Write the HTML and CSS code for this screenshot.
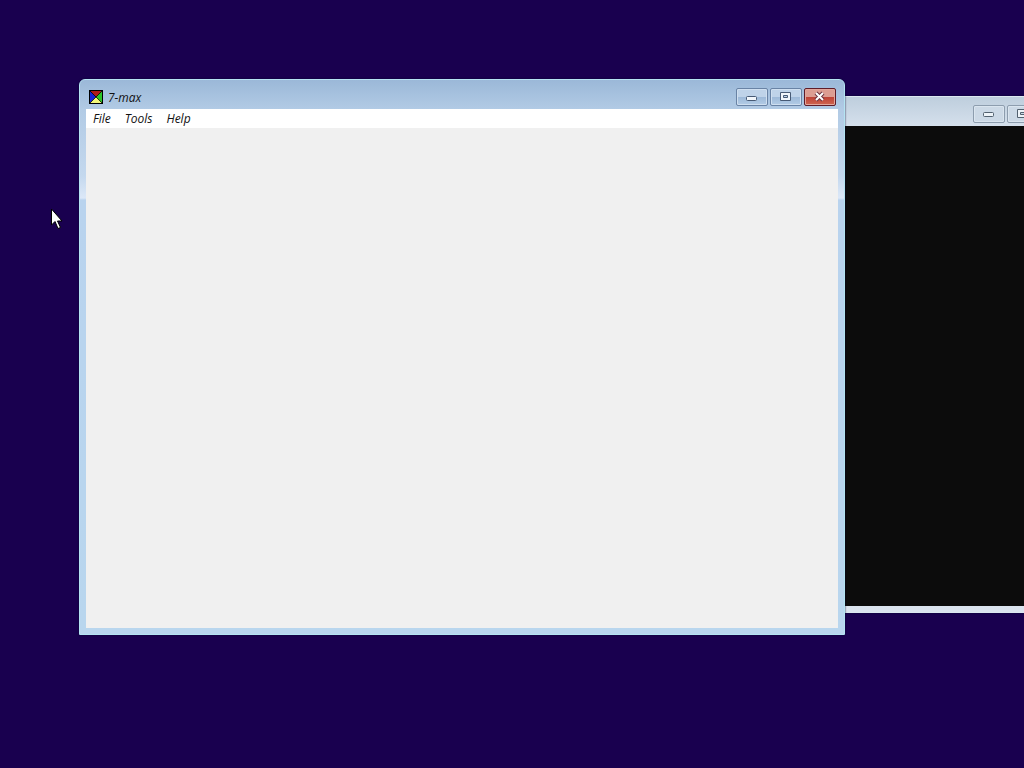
FILE: index.html
```html
<!DOCTYPE html>
<html lang="en">
<head>
  <meta charset="UTF-8">
  <title>7-max</title>
  <meta name="viewport" content="width=device-width, initial-scale=1.0">
  <link rel="stylesheet" href="styles.css">
</head>
<body>

  <main class="desktop">

    <section class="window console" aria-label="Console">
      <header class="titlebar">
        <div class="controls">
          <button class="control" type="button" aria-label="Minimize">
            <svg width="12" height="12" viewBox="0 0 12 12"><rect x="0.5" y="4.5" width="10" height="4" rx="1" fill="#edf3f8" stroke="#52616f"/></svg>
          </button>
          <button class="control" type="button" aria-label="Maximize">
            <svg width="12" height="12" viewBox="0 0 12 12"><path d="M0.5 1.5h10v8h-10zM3.5 4.5h4v2h-4z" fill="#edf3f8" fill-rule="evenodd" stroke="#52616f"/></svg>
          </button>
          <button class="control" type="button" aria-label="Close">
            <svg width="12" height="12" viewBox="0 0 12 12"><path d="M2 2l7 7M9 2l-7 7" stroke="#52616f" stroke-width="2"/></svg>
          </button>
        </div>
      </header>
      <div class="screen"></div>
    </section>

    <section class="window app" aria-label="7-max">
      <header class="titlebar">
        <svg class="logo" width="14" height="14" viewBox="0 0 14 14">
          <rect width="14" height="14" fill="#000"/>
          <path d="M1 1h12L7 7z" fill="#b01a1a"/>
          <path d="M1 1l6 6-6 6z" fill="#1722d8"/>
          <path d="M13 1v12L7 7z" fill="#2cc428"/>
          <path d="M1 13h12L7 7z" fill="#f2f77a"/>
          <path d="M1 1l12 12M13 1L1 13" stroke="#000" stroke-width="0.7"/>
        </svg>
        <h1 class="title">7-max</h1>
        <div class="controls">
          <button class="control" type="button" aria-label="Minimize">
            <svg width="12" height="12" viewBox="0 0 12 12"><rect x="0.5" y="5.5" width="10" height="4" rx="1" fill="#f1f6fb" stroke="#475a75"/></svg>
          </button>
          <button class="control" type="button" aria-label="Maximize">
            <svg width="12" height="12" viewBox="0 0 12 12"><path d="M0.5 1.5h10v8h-10zM3.5 4.5h4v2h-4z" fill="#f1f6fb" fill-rule="evenodd" stroke="#475a75"/></svg>
          </button>
          <button class="control close" type="button" aria-label="Close">
            <svg width="12" height="12" viewBox="0 0 12 12"><path d="M2 2l7 7M9 2l-7 7" stroke="#6b3340" stroke-width="4"/><path d="M2 2l7 7M9 2l-7 7" stroke="#fff" stroke-width="2"/></svg>
          </button>
        </div>
      </header>
      <nav class="menubar">
        <button class="menu" type="button">File</button>
        <button class="menu" type="button">Tools</button>
        <button class="menu" type="button">Help</button>
      </nav>
      <div class="content"></div>
    </section>

    <svg class="cursor" width="12" height="22" viewBox="0 0 12 22">
      <path d="M0.5 1v16l3.500-3.500 3 7 2.500-1-3-6.500h4.500z" fill="#fff" stroke="#000"/>
    </svg>

  </main>

</body>
</html>
```
FILE: styles.css
```css
body {
  margin: 0;
  font-family: "Open Sans", "Noto Sans", sans-serif;
  font-size: 12px;
  font-style: italic;
  color: #111;
}
.desktop {
  position: relative;
  height: 100vh;
  overflow: hidden;
  background: #19004f;
}
.window {
  position: absolute;
  box-sizing: border-box;
  display: flex;
  flex-direction: column;
  padding: 0 6px 6px;
  border-radius: 6px 6px 0 0;
}
.app {
  left: 79px;
  top: 79px;
  width: 766px;
  height: 556px;
  border: 1px solid #b4e4f2;
  background: linear-gradient(#9bb8d8, #b2cbe5 30px, #c4d8ee 96px, #dce8f8 118px, #b9d3ee 120px, #b9d6ee);
  box-shadow: 0 0 2px #06062e;
}
.console {
  left: 96px;
  top: 96px;
  width: 986px;
  height: 517px;
  border: 1px solid #dce8f0;
  background: linear-gradient(#becedd, #d5e0ec 29px, #dbe4ef);
  box-shadow: 0 0 2px #06062e;
}
.titlebar {
  display: flex;
  align-items: center;
  height: 29px;
  padding: 5px 2px 0 3px;
  box-sizing: border-box;
}
.title {
  margin: 0;
  padding: 2px 0 0 5px;
  font-size: 12px;
  font-weight: normal;
  line-height: 16px;
}
.controls {
  display: flex;
  gap: 2px;
  margin-left: auto;
}
.control {
  display: flex;
  align-items: center;
  justify-content: center;
  box-sizing: border-box;
  width: 32px;
  height: 18px;
  padding: 0;
  border: 1px solid #6983a5;
  border-radius: 2px;
  background: linear-gradient(#bfd3e9 50%, #9db9d8 50%, #b3cce6);
  box-shadow: inset 0 0 0 1px #cfdff0;
}
.console .control {
  border-color: #8d9dae;
  background: #ccd9e6;
  box-shadow: inset 0 0 0 1px #dae5ef;
}
.app .close {
  border-color: #5f1c28;
  background: linear-gradient(#dc9d92 50%, #bd4236 50%, #cf6650);
  box-shadow: inset 0 0 0 1px #e2a69b;
}
.menubar {
  display: flex;
  height: 19px;
  background: #fff;
}
.menu {
  padding: 0 7px;
  border: none;
  background: none;
  color: inherit;
  font: inherit;
  line-height: 19px;
}
.content {
  flex: 1;
  background: #f0f0f0;
}
.screen {
  flex: 1;
  background: #0c0c0c;
}
.cursor {
  position: absolute;
  left: 51px;
  top: 208px;
}
```
